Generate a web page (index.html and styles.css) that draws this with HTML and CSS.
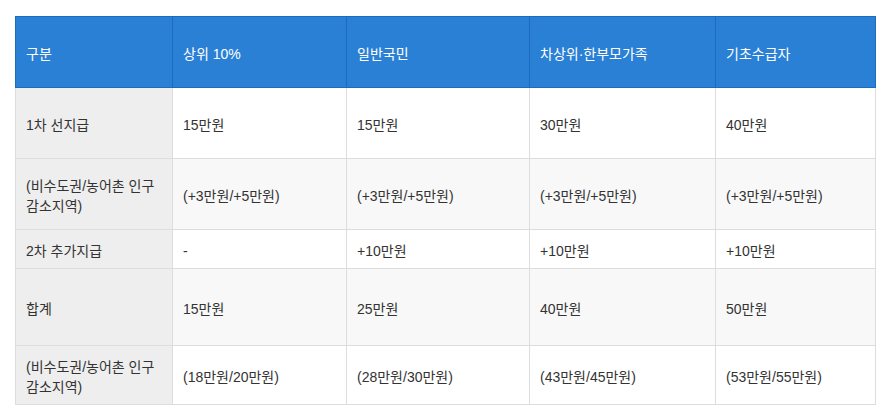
FILE: index.html
```html
<!DOCTYPE html>
<html lang="ko">
<head>
<meta charset="utf-8">
<link rel="stylesheet" href="styles.css">
</head>
<body>
<div class="page">
<table class="grid">
  <colgroup>
    <col class="c1"><col class="c2"><col class="c3"><col class="c4"><col class="c5">
  </colgroup>
  <thead>
    <tr class="r-head">
      <th>구분</th><th>상위 10%</th><th>일반국민</th><th>차상위·한부모가족</th><th>기초수급자</th>
    </tr>
  </thead>
  <tbody>
    <tr class="r1">
      <td>1차 선지급</td><td>15만원</td><td>15만원</td><td>30만원</td><td>40만원</td>
    </tr>
    <tr class="r2 alt">
      <td>(비수도권/농어촌 인구<br>감소지역)</td><td>(+3만원/+5만원)</td><td>(+3만원/+5만원)</td><td>(+3만원/+5만원)</td><td>(+3만원/+5만원)</td>
    </tr>
    <tr class="r3">
      <td>2차 추가지급</td><td>-</td><td>+10만원</td><td>+10만원</td><td>+10만원</td>
    </tr>
    <tr class="r4 alt">
      <td>합계</td><td>15만원</td><td>25만원</td><td>40만원</td><td>50만원</td>
    </tr>
    <tr class="r5">
      <td>(비수도권/농어촌 인구<br>감소지역)</td><td>(18만원/20만원)</td><td>(28만원/30만원)</td><td>(43만원/45만원)</td><td>(53만원/55만원)</td>
    </tr>
  </tbody>
</table>
</div>
</body>
</html>
```
FILE: styles.css
```css
html, body {
  margin: 0;
  padding: 0;
  background: #ffffff;
}
.page {
  padding: 16px 11px 0 15px;
}
.grid {
  border-collapse: collapse;
  table-layout: fixed;
  width: 860px;
  font-family: "Liberation Sans", Arial, "Noto Sans CJK KR", sans-serif;
  font-size: 14px;
  line-height: 20px;
  color: #333333;
}
.c1 { width: 157px; }
.c2 { width: 174px; }
.c3 { width: 183px; }
.c4 { width: 186px; }
.c5 { width: 160px; }
.grid th, .grid td {
  text-align: left;
  vertical-align: middle;
  padding: 4px 10px 0 10px;
  font-weight: normal;
}
.grid th {
  background: #2980d5;
  color: #ffffff;
  border: 1px solid #1c6bbd;
}
.grid td {
  border: 1px solid #dddddd;
  background: #ffffff;
}
.grid tr.alt td {
  background: #f8f8f8;
}
.grid td:first-child,
.grid tr.alt td:first-child {
  background: #eeeeee;
}
.r-head { height: 71px; }
.r1 { height: 71px; }
.r2 { height: 71px; }
.r3 { height: 39px; }
.r4 { height: 77px; }
.r5 { height: 59px; }
```
